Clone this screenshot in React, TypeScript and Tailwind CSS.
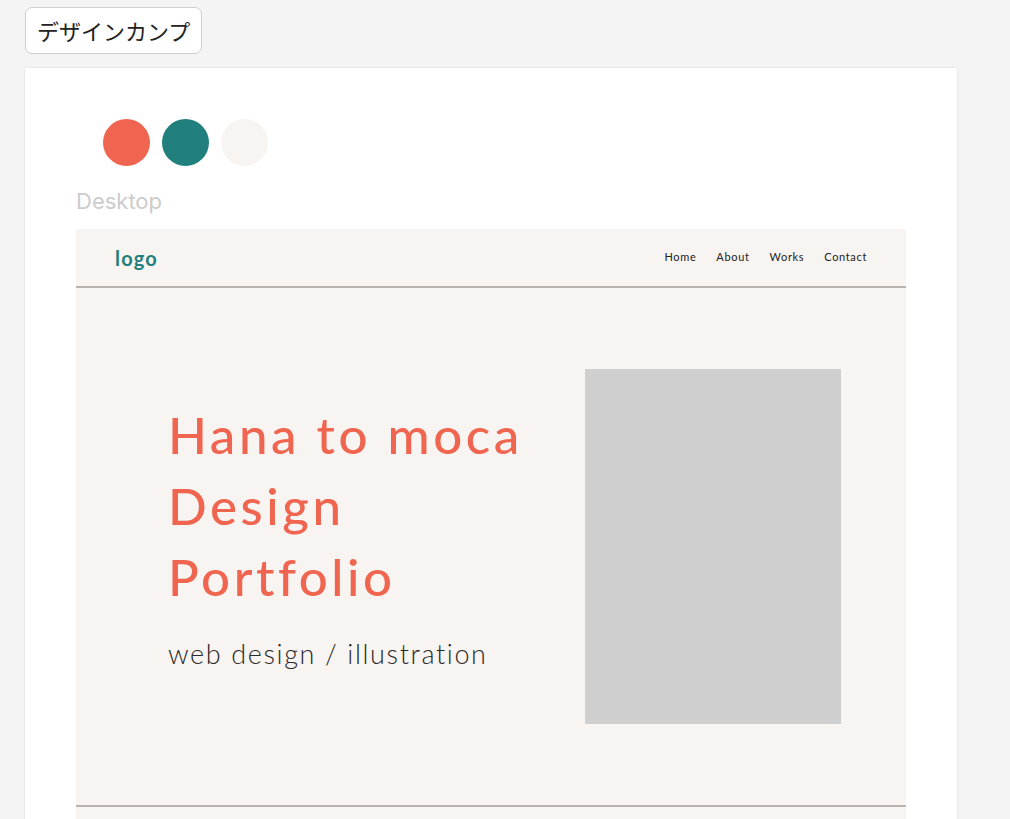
import React from "react";

export default function App() {
  return (
    <div className="min-h-screen bg-[#f4f4f4] pt-[7px] pl-[25px] pr-[53px] pb-10" style={{ fontFamily: "'Noto Sans', 'Noto Sans CJK JP', sans-serif" }}>
      <button className="h-[47px] rounded-[7px] border border-[#cfcfcf] bg-white px-[11px] text-[22px] text-[#222] [font-family:'Noto_Sans_CJK_JP',sans-serif]">
        デザインカンプ
      </button>
      <div className="mt-[14px] w-[932px] bg-white px-[51px] pt-[51px] shadow-[0_0_2px_rgba(0,0,0,0.12)]">
        <div className="flex gap-[12px] pl-[27px]">
          <div className="h-[47px] w-[47px] rounded-full bg-[#ef654f]" />
          <div className="h-[47px] w-[47px] rounded-full bg-[#21807e]" />
          <div className="h-[47px] w-[47px] rounded-full bg-[#f8f4f1]" />
        </div>
        <div className="mt-[21px] text-[22px] leading-[28px] text-[#cccccc] [font-family:Inter,sans-serif]">Desktop</div>
        <div className="mt-[14px] bg-[#f8f4f1] [font-family:Lato,sans-serif]">
          <header className="flex h-[59px] items-center justify-between border-b-2 border-[#b8b3ae] px-[39px]">
            <div className="text-[20px] font-bold tracking-[0.06em] text-[#21807e]">logo</div>
            <nav className="flex gap-[20px] text-[11px] tracking-[0.06em] text-[#222]">
              <span>Home</span>
              <span>About</span>
              <span>Works</span>
              <span>Contact</span>
            </nav>
          </header>
          <section className="flex h-[519px] items-center justify-between border-b-2 border-[#b8b3ae] pl-[92px] pr-[65px]">
            <div className="mt-[111px] self-start">
              <h1 className="text-[51px] font-medium leading-[71px] tracking-[0.07em] text-[#ef654f]">
                Hana to moca
                <br />
                Design
                <br />
                Portfolio
              </h1>
              <p className="mt-[24px] text-[27px] font-light leading-[36px] tracking-[0.06em] text-[#2a2a2a]">web design / illustration</p>
            </div>
            <div className="h-[355px] w-[256px] bg-[#cfcfcf]" />
          </section>
          <div className="h-[40px]" />
        </div>
      </div>
    </div>
  );
}
